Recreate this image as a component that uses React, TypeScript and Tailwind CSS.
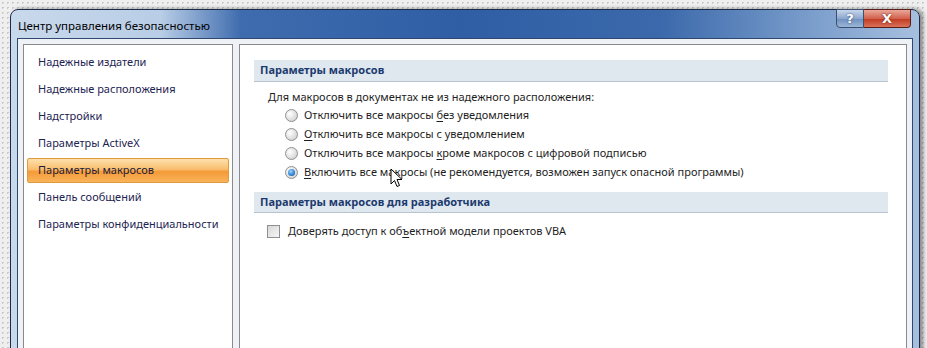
import React from "react";

const sideItems = [
  "Надежные издатели",
  "Надежные расположения",
  "Надстройки",
  "Параметры ActiveX",
  "Параметры макросов",
  "Панель сообщений",
  "Параметры конфиденциальности",
];

function Radio({ checked }: { checked?: boolean }) {
  return (
    <span className="relative inline-flex w-[13px] h-[13px] rounded-full border border-[#8f8f8f] bg-[radial-gradient(circle_at_35%_35%,#ffffff,#d8d8d8_70%,#c4c4c4)] items-center justify-center shrink-0">
      {checked && (
        <span className="w-[7px] h-[7px] rounded-full bg-[radial-gradient(circle_at_40%_35%,#9fd4ff,#2a7fd0_60%,#14539a)]" />
      )}
    </span>
  );
}

function U({ children }: { children: React.ReactNode }) {
  return <span className="underline underline-offset-2">{children}</span>;
}

export default function App() {
  return (
    <div
      className="relative w-[927px] h-[348px] overflow-hidden bg-[#efefef] bg-[radial-gradient(#c9c9c9_1px,transparent_1px)] bg-[length:5px_5px] pt-[9px] pl-[10px]"
      style={{ fontFamily: '"Noto Sans", "Open Sans", sans-serif' }}
    >
      {/* window */}
      <div className="relative w-[910px] h-[360px] rounded-t-[8px] border border-[#1b2c48] bg-[linear-gradient(90deg,#c9d9ec_0px,#b8cde6_150px,#3f6cae_230px,#2f5ea5_450px,#3b69ab_650px,#7a9dcb_800px,#a8c0df_910px)] shadow-[3px_0_4px_rgba(0,0,0,0.45)] flex flex-col">
        {/* title */}
        <div className="h-[28px] flex items-center pl-[7px] pt-[3px] shrink-0">
          <span className="text-[11.5px] text-black">Центр управления безопасностью</span>
        </div>
        {/* buttons */}
        <div className="absolute top-[-1px] right-[8px] flex">
          <div className="w-[28px] h-[19px] rounded-bl-[4px] border border-[#3b4f6e] bg-[linear-gradient(180deg,#c7d6ea,#8ca8cf_50%,#6f8fbf_51%,#9cb6d8)] flex items-center justify-center text-white font-bold text-[13px] leading-none" style={{ fontFamily: '"DejaVu Sans", sans-serif', textShadow: "0 0 2px #243b60" }}>
            ?
          </div>
          <div className="w-[47px] h-[19px] rounded-br-[4px] border border-l-0 border-[#5a1d18] bg-[linear-gradient(180deg,#e9a89a,#d2614d_50%,#c0391f_51%,#d9725a)] flex items-center justify-center text-white font-bold text-[13px] leading-none" style={{ fontFamily: '"DejaVu Sans", sans-serif', textShadow: "0 0 2px #5a1208" }}>
            X
          </div>
        </div>
        {/* client */}
        <div className="mx-[6px] flex-1 border border-[#30486e] bg-[#eef2f7] px-[5px] pt-[5px] flex gap-[6px]">
          {/* left panel */}
          <div className="w-[210px] border border-[#8a8a8a] bg-white pt-[4px] px-[3px] shrink-0">
            {sideItems.map((t, i) =>
              i === 4 ? (
                <div
                  key={t}
                  className="h-[25px] my-[1px] flex items-center pl-[10px] rounded-[2px] border border-[#e39a3c] bg-[linear-gradient(180deg,#fde1ad,#f9bd6d_45%,#f59a37_55%,#f8b45c)] text-[11px] text-[#1c1c3a]"
                >
                  {t}
                </div>
              ) : (
                <div key={t} className="h-[27px] flex items-center pl-[11px] text-[11px] text-[#1d2452] whitespace-nowrap">
                  {t}
                </div>
              )
            )}
          </div>
          {/* right panel */}
          <div className="relative flex-1 border border-[#8a8a8a] bg-white pt-[15px] pl-[14px] pr-[18px] text-[11px] text-[#1e1e1e]">
            <div className="h-[22px] bg-[#dfe7ef] border-b border-[#b9c3cf] flex items-center pl-[6px] font-bold text-[#1c3a6e]">
              Параметры макросов
            </div>
            <div className="pl-[14px] pt-[7px]">
              <div className="h-[17px] flex items-center">Для макросов в документах не из надежного расположения:</div>
              <div className="pl-[17px]">
                <div className="h-[19px] flex items-center gap-[6px]">
                  <Radio />
                  <span>Отключить все макросы <U>б</U>ез уведомления</span>
                </div>
                <div className="h-[19px] flex items-center gap-[6px]">
                  <Radio />
                  <span><U>О</U>тключить все макросы с уведомлением</span>
                </div>
                <div className="h-[19px] flex items-center gap-[6px]">
                  <Radio />
                  <span>Отключить все макросы <U>к</U>роме макросов с цифровой подписью</span>
                </div>
                <div className="h-[19px] flex items-center gap-[6px]">
                  <Radio checked />
                  <span><U>В</U>ключить все макросы (не рекомендуется, возможен запуск опасной программы)</span>
                </div>
              </div>
            </div>
            <div className="mt-[10px] h-[21px] bg-[#dfe7ef] border-b border-[#b9c3cf] flex items-center pl-[6px] font-bold text-[#1c3a6e]">
              Параметры макросов для разработчика
            </div>
            <div className="pl-[13px] pt-[8px] h-[20px] flex items-center gap-[8px] box-content">
              <span className="w-[13px] h-[13px] border border-[#8f8f8f] bg-[linear-gradient(135deg,#d8d8d8,#f6f6f6)] shrink-0" />
              <span>Доверять доступ к об<U>ъ</U>ектной модели проектов VBA</span>
            </div>
            {/* cursor */}
            <svg className="absolute left-[150px] top-[123px]" width="13" height="20" viewBox="0 0 13 20">
              <path d="M1 1 L1 16 L4.5 12.5 L7 18.5 L9.5 17.5 L7 11.5 L12 11.5 Z" fill="white" stroke="black" strokeWidth="1" strokeLinejoin="round" />
            </svg>
          </div>
        </div>
      </div>
    </div>
  );
}
